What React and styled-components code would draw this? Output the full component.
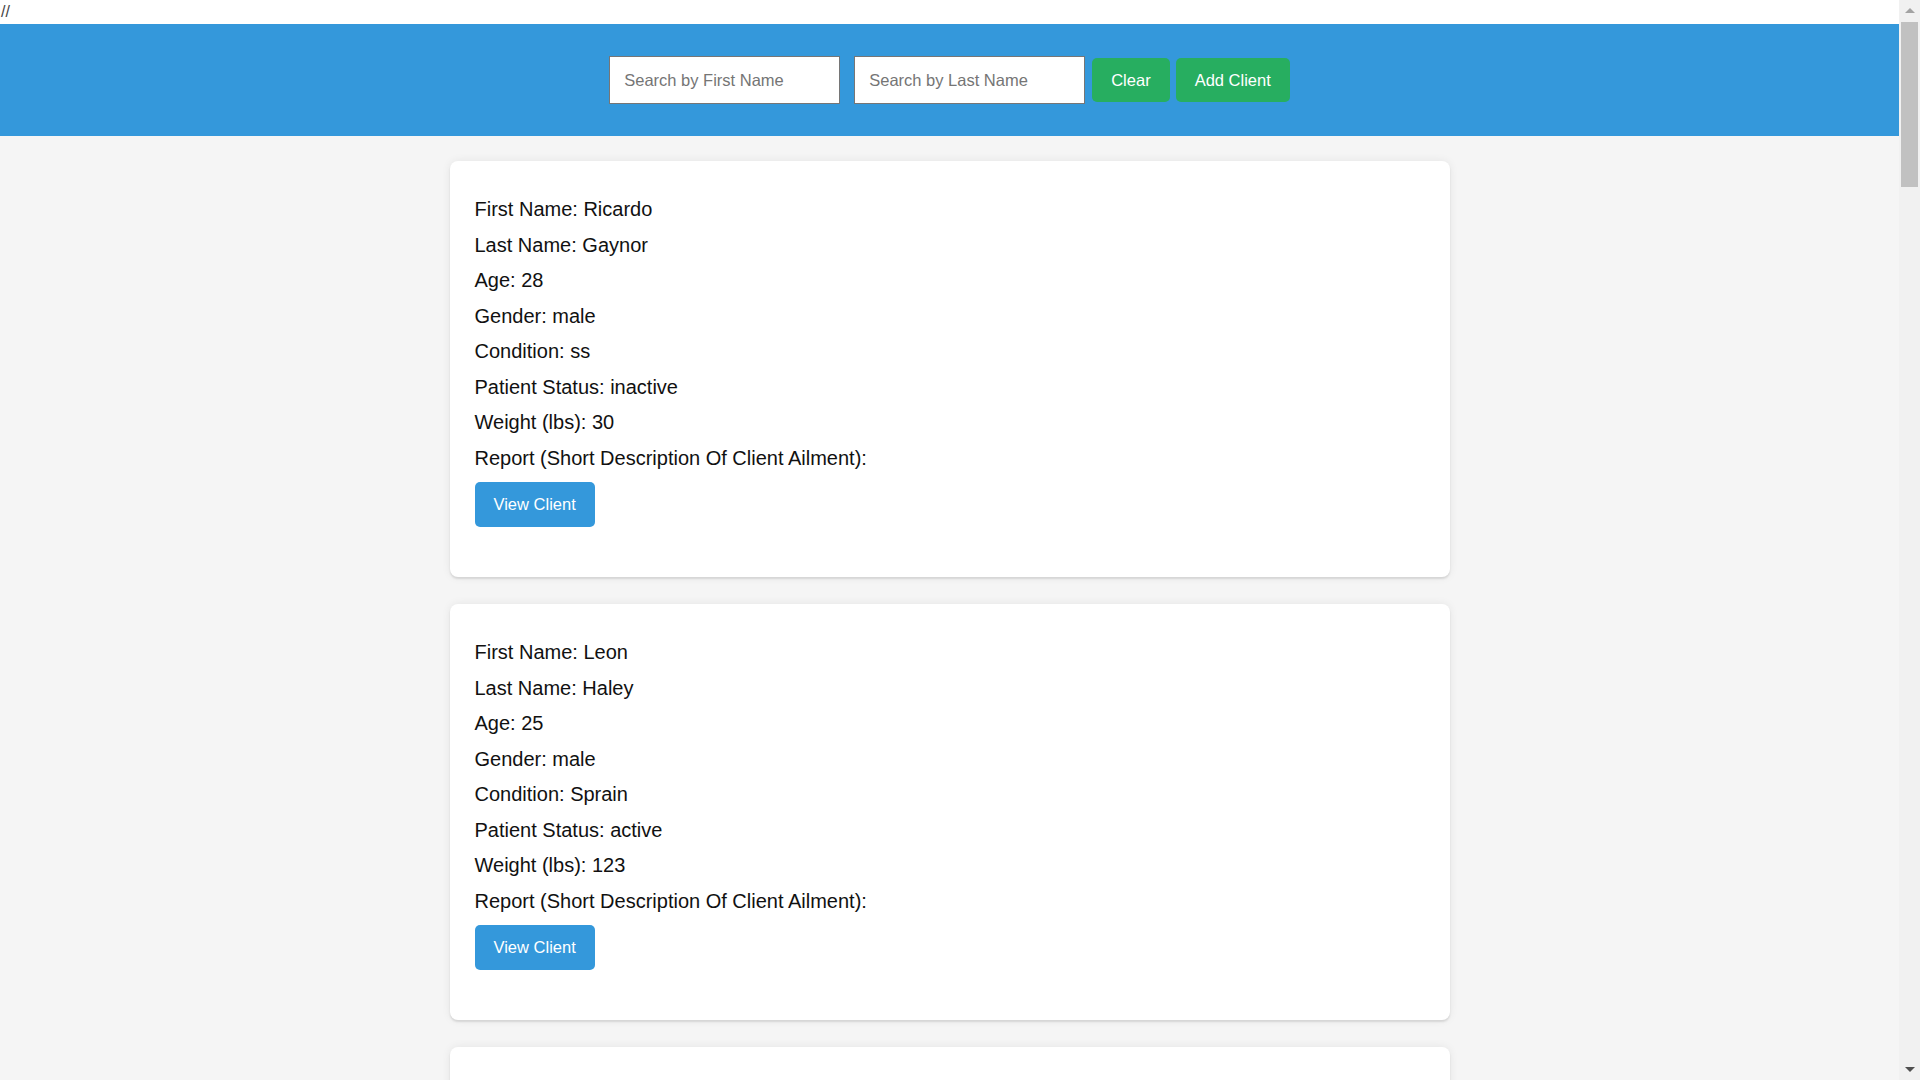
import React, { useState } from "react";
import styled, { createGlobalStyle } from "styled-components";

const GlobalStyle = createGlobalStyle`
  html, body {
    margin: 0;
    padding: 0;
  }
  body {
    background-color: #f5f5f5;
    font-family: "Liberation Sans", Arial, sans-serif;
    color: #111;
    overflow: hidden;
  }
`;

const clients = [
  {
    id: 1,
    firstName: "Ricardo",
    lastName: "Gaynor",
    age: 28,
    gender: "male",
    condition: "ss",
    status: "inactive",
    weight: 30,
    report: "",
  },
  {
    id: 2,
    firstName: "Leon",
    lastName: "Haley",
    age: 25,
    gender: "male",
    condition: "Sprain",
    status: "active",
    weight: 123,
    report: "",
  },
  {
    id: 3,
    firstName: "Marta",
    lastName: "Jensen",
    age: 41,
    gender: "female",
    condition: "Back pain",
    status: "active",
    weight: 142,
    report: "",
  },
];

function App() {
  const [firstName, setFirstName] = useState("");
  const [lastName, setLastName] = useState("");

  const clear = () => {
    setFirstName("");
    setLastName("");
  };

  return (
    <Viewport>
      <GlobalStyle />
      <Main>
        <TopNote>//</TopNote>
        <SearchBar>
          <SearchInput
            placeholder="Search by First Name"
            value={firstName}
            onChange={(e) => setFirstName(e.target.value)}
          />
          <SearchInput
            $last
            placeholder="Search by Last Name"
            value={lastName}
            onChange={(e) => setLastName(e.target.value)}
          />
          <GreenButton onClick={clear}>Clear</GreenButton>
          <GreenButton $spaced>Add Client</GreenButton>
        </SearchBar>
        <ClientList>
          {clients.map((c) => (
            <ClientCard key={c.id}>
              <Field>First Name: {c.firstName}</Field>
              <Field>Last Name: {c.lastName}</Field>
              <Field>Age: {c.age}</Field>
              <Field>Gender: {c.gender}</Field>
              <Field>Condition: {c.condition}</Field>
              <Field>Patient Status: {c.status}</Field>
              <Field>Weight (lbs): {c.weight}</Field>
              <Field>Report (Short Description Of Client Ailment): {c.report}</Field>
              <ViewButton>View Client</ViewButton>
            </ClientCard>
          ))}
        </ClientList>
      </Main>
      <ScrollRail>
        <Arrow $up />
        <Thumb />
        <Arrow />
      </ScrollRail>
    </Viewport>
  );
}

const Viewport = styled.div`
  display: flex;
  width: 100vw;
  height: 100vh;
  overflow: hidden;
`;

const Main = styled.div`
  flex: 1;
  min-width: 0;
  overflow: hidden;
`;

const TopNote = styled.div`
  height: 24px;
  line-height: 24px;
  padding-left: 1px;
  font-size: 16px;
  color: #444;
  background-color: #fff;
`;

const SearchBar = styled.div`
  height: 112px;
  display: flex;
  justify-content: center;
  align-items: center;
  background-color: #3498db;
`;

const SearchInput = styled.input`
  box-sizing: border-box;
  width: 231px;
  height: 48px;
  padding: 0 14px;
  margin-right: ${(p) => (p.$last ? "7px" : "14px")};
  border: 1px solid #767676;
  border-radius: 0;
  background-color: #fff;
  font-family: "Liberation Sans", Arial, sans-serif;
  font-size: 16.5px;
  color: #222;
  outline: none;

  &::placeholder {
    color: #757575;
  }
`;

const GreenButton = styled.button`
  height: 44px;
  padding: 0 19px;
  margin-left: ${(p) => (p.$spaced ? "6px" : "0")};
  border: none;
  border-radius: 5px;
  background-color: #27ae60;
  color: #fff;
  font-family: "Liberation Sans", Arial, sans-serif;
  font-size: 16.5px;
  cursor: pointer;
`;

const ClientList = styled.div`
  display: flex;
  flex-direction: column;
  align-items: center;
  padding: 25px 0 40px;
  gap: 27px;
`;

const ClientCard = styled.div`
  box-sizing: border-box;
  width: 1000px;
  padding: 25px;
  background-color: #fff;
  border-radius: 8px;
  box-shadow: 0 0 10px rgba(0, 0, 0, 0.07), 0 2px 2px rgba(0, 0, 0, 0.1);
`;

const Field = styled.p`
  margin: 12px 0;
  font-size: 20px;
  line-height: 23.5px;
  color: #111;
`;

const ViewButton = styled.button`
  display: block;
  height: 45px;
  padding: 0 19px;
  margin-bottom: 25px;
  border: none;
  border-radius: 5px;
  background-color: #3498db;
  color: #fff;
  font-family: "Liberation Sans", Arial, sans-serif;
  font-size: 16.5px;
  cursor: pointer;
`;

const ScrollRail = styled.div`
  width: 21px;
  flex-shrink: 0;
  display: flex;
  flex-direction: column;
  align-items: center;
  background-color: #f1f1f1;
`;

const Arrow = styled.div`
  width: 0;
  height: 0;
  margin: ${(p) => (p.$up ? "8px 0 4px" : "auto 0 8px")};
  border-left: 5px solid transparent;
  border-right: 5px solid transparent;
  ${(p) =>
    p.$up
      ? "border-bottom: 5px solid #a3a3a3;"
      : "border-top: 5px solid #505050;"}
`;

const Thumb = styled.div`
  width: 17px;
  height: 165px;
  margin-top: 5px;
  background-color: #c1c1c1;
`;

export default App;
